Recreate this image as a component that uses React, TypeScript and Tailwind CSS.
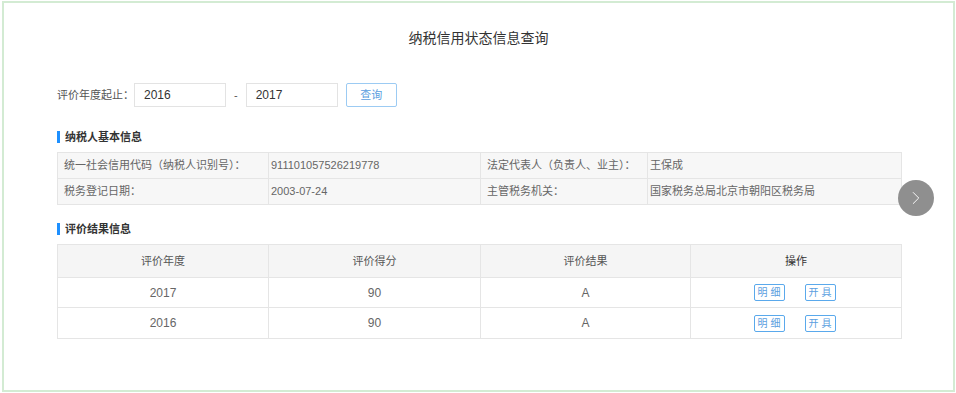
import { ChevronRight } from "lucide-react";

const font = { fontFamily: '"Liberation Sans", "Noto Sans CJK SC", sans-serif' };

function SectionTitle({ text }: { text: string }) {
  return (
    <div className="flex items-center h-[20px]">
      <span className="w-[3px] h-[12px] bg-[#1e90ff]" />
      <span className="ml-[5px] text-[11px] font-bold text-[#333]">{text}</span>
    </div>
  );
}

function SmallBtn({ text }: { text: string }) {
  return (
    <span className="inline-flex items-center justify-center w-[31px] h-[17px] border border-[#5aa9ec] rounded-[2px] text-[10px] text-[#5a9ee0] tracking-[3px] pl-[3px]">
      {text}
    </span>
  );
}

const rows = [
  { year: "2017", score: "90", result: "A" },
  { year: "2016", score: "90", result: "A" },
];

export default function App() {
  return (
    <div className="w-[956px] h-[393px] bg-white pl-[2px] pt-[1px]" style={font}>
      <div className="relative w-[953px] h-[391px] border-2 border-[#d3ebd3] bg-white">
        <div className="pt-[25px] text-center text-[14px] text-[#333] leading-[20px]">纳税信用状态信息查询</div>

        <div className="flex items-center mt-[35px] ml-[53px] h-[24px] text-[11px] text-[#555] whitespace-nowrap">
          <span>评价年度起止：</span>
          <div className="w-[92px] h-[24px] border border-[#e3e3e3] flex items-center pl-[9px] text-[12px] text-[#333]">2016</div>
          <span className="mx-[8px] text-[#555]">-</span>
          <div className="w-[92px] h-[24px] border border-[#e3e3e3] flex items-center pl-[9px] text-[12px] text-[#333]">2017</div>
          <div className="ml-[8px] w-[51px] h-[24px] border border-[#9ccbf3] rounded-[2px] flex items-center justify-center text-[11px] text-[#5a9ee0]">查询</div>
        </div>

        <div className="mt-[20px] ml-[53px]">
          <SectionTitle text="纳税人基本信息" />
        </div>

        <div className="mt-[5px] ml-[53px] w-[845px] border border-[#e5e5e5] bg-[#f7f7f7] text-[11px] text-[#666] whitespace-nowrap">
          <div className="grid grid-cols-[211px_212px_167px_1fr] h-[26px] border-b border-[#e5e5e5]">
            <div className="flex items-center pl-[6px] border-r border-[#e5e5e5]">统一社会信用代码（纳税人识别号）：</div>
            <div className="flex items-center pl-[2px] border-r border-[#e5e5e5]">911101057526219778</div>
            <div className="flex items-center pl-[6px] border-r border-[#e5e5e5]">法定代表人（负责人、业主）：</div>
            <div className="flex items-center pl-[2px]">王保成</div>
          </div>
          <div className="grid grid-cols-[211px_212px_167px_1fr] h-[25px]">
            <div className="flex items-center pl-[6px] border-r border-[#e5e5e5]">税务登记日期：</div>
            <div className="flex items-center pl-[2px] border-r border-[#e5e5e5]">2003-07-24</div>
            <div className="flex items-center pl-[6px] border-r border-[#e5e5e5]">主管税务机关：</div>
            <div className="flex items-center pl-[2px]">国家税务总局北京市朝阳区税务局</div>
          </div>
        </div>

        <div className="mt-[14px] ml-[53px]">
          <SectionTitle text="评价结果信息" />
        </div>

        <div className="mt-[5px] ml-[53px] w-[845px] border border-[#e5e5e5] text-[11px] text-[#666]">
          <div className="grid grid-cols-[211px_212px_210px_1fr] h-[33px] bg-[#f5f5f5] border-b border-[#e5e5e5] text-[#555]">
            <div className="flex items-center justify-center border-r border-[#e5e5e5]">评价年度</div>
            <div className="flex items-center justify-center border-r border-[#e5e5e5]">评价得分</div>
            <div className="flex items-center justify-center border-r border-[#e5e5e5]">评价结果</div>
            <div className="flex items-center justify-center text-[#333]">操作</div>
          </div>
          {rows.map((r, i) => (
            <div
              key={r.year}
              className={`grid grid-cols-[211px_212px_210px_1fr] h-[30px] text-[12px] ${i === 0 ? "border-b border-[#e5e5e5]" : ""}`}>
              <div className="flex items-center justify-center border-r border-[#e5e5e5]">{r.year}</div>
              <div className="flex items-center justify-center border-r border-[#e5e5e5]">{r.score}</div>
              <div className="flex items-center justify-center border-r border-[#e5e5e5]">{r.result}</div>
              <div className="flex items-center justify-center gap-[20px] pr-[3px]">
                <SmallBtn text="明细" />
                <SmallBtn text="开具" />
              </div>
            </div>
          ))}
        </div>

        <div className="absolute left-[894px] top-[177px] w-[36px] h-[36px] rounded-full bg-[#8f8f8f] flex items-center justify-center">
          <ChevronRight className="w-[22px] h-[22px] text-white" strokeWidth={1} />
        </div>
      </div>
    </div>
  );
}
